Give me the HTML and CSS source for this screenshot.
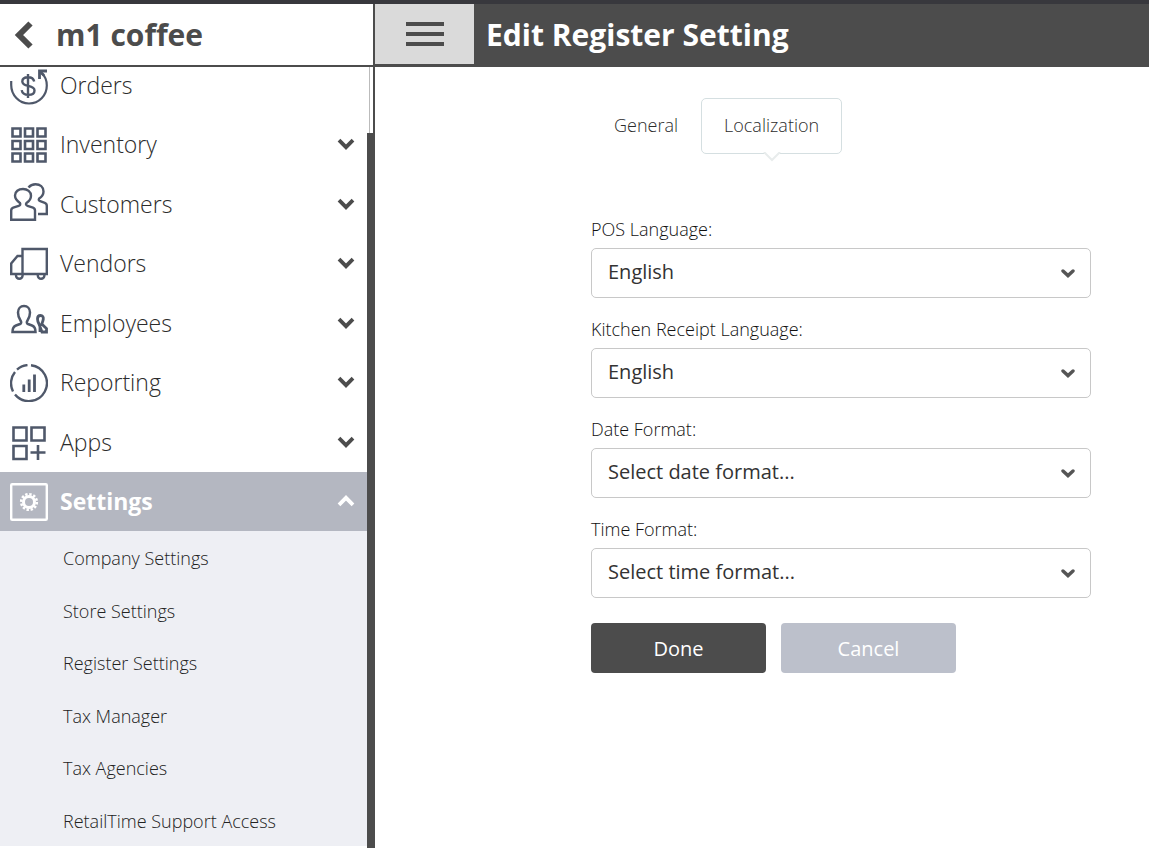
FILE: index.html
```html
<!DOCTYPE html>
<html lang="en">
<head>
<meta charset="utf-8">
<meta name="viewport" content="width=device-width, initial-scale=1">
<title>Edit Register Setting</title>
<link rel="stylesheet" href="styles.css">
</head>
<body>
<svg class="defs" width="0" height="0" aria-hidden="true">
  <symbol id="chevron" viewBox="0 0 18 12"><path d="M2 2.200l7 7 7-7" fill="none" stroke="currentColor" stroke-width="3.800"/></symbol>
  <symbol id="select-chevron" viewBox="0 0 14 10"><path d="M2 2l5 4.600 5-4.600" fill="none" stroke="currentColor" stroke-width="3.400" stroke-linecap="round"/></symbol>
</svg>
<div class="app">
  <aside class="sidebar">
    <div class="store">
      <button class="back" type="button" aria-label="Back"><svg width="20" height="28" viewBox="0 0 20 28"><path d="M16.500 2.500L5 14l11.500 11.500" fill="none" stroke="currentColor" stroke-width="6"/></svg></button>
      <span class="store-name">m1 coffee</span>
    </div>
    <div class="sidebar-body">
      <nav class="nav" aria-label="Main">
        <ul class="menu">
          <li><a class="item" href="#"><svg class="icon" viewBox="0 0 38 38"><g fill="none" stroke="currentColor" stroke-width="2.200"><path d="M1.200 14v4C1.200 28 9 36.500 19 36.500S36.800 28.500 36.800 18.500c0-5.500-1.800-9.500-5.300-12.500"/><path d="M37 4H29.500v8" stroke-width="2.800"/><path d="M30 4.500l4 4" stroke-width="2.600"/><path d="M24.200 14.500c-.6-2.800-2.900-4.300-6.100-4.300-3.500 0-5.800 1.600-5.800 4.300 0 6.200 12.200 2.700 12.200 8.900 0 2.900-2.500 4.500-6.100 4.500-3.800 0-6.200-1.700-6.700-4.800M18 7v24" stroke-width="2.400"/></g></svg><span>Orders</span></a></li>
          <li><a class="item" href="#"><svg class="icon" viewBox="0 0 38 38"><g fill="none" stroke="currentColor" stroke-width="2.600"><path d="M2.500 2.500h8v8h-8zM15 2.500h8v8h-8zM27.500 2.500h8v8h-8zM2.500 15h8v8h-8zM15 15h8v8h-8zM27.500 15h8v8h-8zM2.500 27.500h8v8h-8zM15 27.500h8v8h-8zM27.500 27.500h8v8h-8z"/></g></svg><span>Inventory</span><svg class="arrow"><use href="#chevron"/></svg></a></li>
          <li><a class="item" href="#"><svg class="icon raised" viewBox="0 0 38 38"><g fill="none" stroke="currentColor" stroke-width="2.400"><path d="M1.200 36.800V27.500c0-1.500.6-2.400 2-2.900l5.500-1.800c1.500-.5 2-1.500 1.200-2.900C6.500 17.500 5 15.500 5 12.500 5 8.500 8.500 6 13 6s8 2.700 8 6.700c0 3-1.500 5.300-4.500 7.200-1 1.400-.5 2.400 1 2.900l5.500 1.800c1.400.5 2 1.400 2 2.900v9.300z"/><path d="M18.500 4.500C20.300 2.200 22.500 1.200 25.500 1.200c4.500 0 8 2.800 8 7.300 0 2.900-1.500 5.200-4.300 7-.9 1.300-.4 2.200 1 2.700l4.600 1.600c1.400.5 2 1.400 2 2.900V31H28"/></g></svg><span>Customers</span><svg class="arrow"><use href="#chevron"/></svg></a></li>
          <li><a class="item" href="#"><svg class="icon" viewBox="0 0 38 38"><g fill="none" stroke="currentColor" stroke-width="2.400"><path d="M12.500 4H36.800v25H1.200V18.500L7.500 11h5zM12.500 4v25"/><path d="M6 29v1.500a3.300 3.300 0 0 0 6.600 0V29M27.800 29v1.500a3.300 3.300 0 0 0 6.600 0V29"/></g></svg><span>Vendors</span><svg class="arrow"><use href="#chevron"/></svg></a></li>
          <li><a class="item" href="#"><svg class="icon raised" viewBox="0 0 38 38"><g fill="none" stroke="currentColor" stroke-width="2.500"><path d="M2.500 30c0-3.500.8-5.500 3.500-6.500l4-1.500c1.500-.7 1.500-1.800.5-3.500C8.800 16 8 13.500 8 10.500 8 6.500 10.500 4 14 4s6 2.500 6 6.500c0 3-.8 5.500-2.500 8-1 1.700-1 2.800.5 3.500l4 1.500c2.700 1 3.500 3 3.500 6.500z"/><path d="M30.500 13.500c2.200 0 3 1.500 2.800 3.500-.2 2-1 3.500-1.500 5l4.700 4.500V30h-4.500l-3-8c-.8-1.500-1.500-3-1.500-5 0-2 .8-3.500 3-3.500M30 22.500V30" stroke-width="2.800"/></g></svg><span>Employees</span><svg class="arrow"><use href="#chevron"/></svg></a></li>
          <li><a class="item" href="#"><svg class="icon" viewBox="0 0 38 38"><g fill="none" stroke="currentColor"><path d="M21 1.200A18 18 0 1 1 5 30.500M3 27.500A18 18 0 0 1 5 8M7 5.700A18 18 0 0 1 17.500 1.100" stroke-width="2.400"/><path d="M13.800 28v-7.500M19.200 28V15.500M24.500 28V10.500" stroke-width="2.800"/></g></svg><span>Reporting</span><svg class="arrow"><use href="#chevron"/></svg></a></li>
          <li><a class="item" href="#"><svg class="icon" viewBox="0 0 38 38"><g fill="none" stroke="currentColor" stroke-width="2.600"><path d="M3.500 3.500h13v13h-13zM21.500 3.500h13v13h-13zM3.500 22h13v13h-13zM28 21v15M20.500 28.500h15"/></g></svg><span>Apps</span><svg class="arrow"><use href="#chevron"/></svg></a></li>
          <li><a class="item active" href="#" aria-expanded="true"><svg class="icon" viewBox="0 0 38 38"><g fill="none" stroke="currentColor"><rect x="1.200" y="1.200" width="35.600" height="35.600" rx="1" stroke-width="2.400"/><circle cx="19" cy="19" r="5.500" stroke-width="3"/><circle cx="19" cy="19" r="7.800" stroke-width="2.600" stroke-dasharray="2.400 1.684"/></g></svg><span>Settings</span><svg class="arrow up"><use href="#chevron"/></svg></a></li>
        </ul>
        <ul class="submenu">
          <li><a href="#">Company Settings</a></li>
          <li><a href="#">Store Settings</a></li>
          <li><a href="#">Register Settings</a></li>
          <li><a href="#">Tax Manager</a></li>
          <li><a href="#">Tax Agencies</a></li>
          <li><a href="#">RetailTime Support Access</a></li>
        </ul>
      </nav>
      <div class="scrollbar" aria-hidden="true"><span class="track"></span><span class="thumb"></span></div>
    </div>
  </aside>
  <main class="main">
    <header class="header">
      <button class="toggle" type="button" aria-label="Toggle menu"><span></span><span></span><span></span></button>
      <h1>Edit Register Setting</h1>
    </header>
    <div class="content">
      <nav class="tabs" aria-label="Sections">
        <a class="tab" href="#">General</a>
        <a class="tab current" href="#" aria-current="page">Localization<svg class="notch" viewBox="0 0 18 10"><path d="M0 0h18L9 9z" fill="#fff"/><path d="M1 0l8 8 8-8" fill="none" stroke="#e8ecec" stroke-width="2"/></svg></a>
      </nav>
      <form class="form">
        <div class="field">
          <label for="pos">POS Language:</label>
          <div class="control"><select id="pos"><option>English</option></select><svg class="caret"><use href="#select-chevron"/></svg></div>
        </div>
        <div class="field">
          <label for="kitchen">Kitchen Receipt Language:</label>
          <div class="control"><select id="kitchen"><option>English</option></select><svg class="caret"><use href="#select-chevron"/></svg></div>
        </div>
        <div class="field">
          <label for="date">Date Format:</label>
          <div class="control"><select id="date"><option>Select date format...</option></select><svg class="caret"><use href="#select-chevron"/></svg></div>
        </div>
        <div class="field">
          <label for="time">Time Format:</label>
          <div class="control"><select id="time"><option>Select time format...</option></select><svg class="caret"><use href="#select-chevron"/></svg></div>
        </div>
        <div class="actions">
          <button class="btn primary" type="button">Done</button>
          <button class="btn" type="button">Cancel</button>
        </div>
      </form>
    </div>
  </main>
</div>
</body>
</html>
```
FILE: styles.css
```css
* { box-sizing: border-box; }
body { margin: 0; font-family: "Open Sans", "Noto Sans", sans-serif; color: #4c4c4c; background: #fff; }
ul { list-style: none; margin: 0; padding: 0; }
a { color: inherit; text-decoration: none; }
button { border: 0; padding: 0; font: inherit; color: inherit; cursor: pointer; }
.defs { display: block; }
.app { display: flex; height: 100vh; border-top: 4px solid #38383d; }

.sidebar { display: flex; flex-direction: column; flex: none; width: 375px; border-right: 2px solid #4c4c4c; }
.store { display: flex; align-items: center; gap: 22px; flex: none; height: 63px; padding-left: 14px; border-bottom: 2px solid #4c4c4c; }
.back { display: flex; background: none; }
.store-name { font-size: 30px; line-height: 40px; font-weight: 700; }
.sidebar-body { display: flex; flex: 1; min-height: 0; overflow: hidden; }
.nav { flex: 1; min-width: 0; }
.menu { display: grid; grid-auto-rows: 1fr; height: 476px; margin-top: -12px; }
.item { display: flex; align-items: center; gap: 12px; height: 100%; padding: 0 12px 0 10px; font-size: 23px; font-weight: 300; color: #2c2c2c; }
.item span { flex: 1; }
.icon { flex: none; width: 38px; height: 38px; margin-top: 2px; color: #4f586a; }
.raised { margin: 0 0 3px; }
.arrow { width: 18px; height: 12px; color: #4c4c4c; }
.up { transform: rotate(180deg); }
.active { background: #b4b7c1; color: #fff; font-weight: 700; }
.active .icon, .active .arrow { color: #fff; }
.submenu { display: grid; grid-auto-rows: 1fr; height: 315px; background: #eeeff4; }
.submenu a { display: flex; align-items: center; height: 100%; padding: 2px 0 0 63px; font-size: 18px; font-weight: 300; color: #222; }
.scrollbar { display: flex; flex-direction: column; flex: none; width: 6px; }
.track { height: 66px; width: 1px; margin-left: 2px; background: #bbb; }
.thumb { flex: 1; background: #4c4c4c; }

.main { flex: 1; min-width: 0; }
.header { display: flex; align-items: stretch; gap: 12px; height: 63px; background: #4c4c4c; color: #fff; }
.toggle { display: flex; flex-direction: column; align-items: center; justify-content: center; gap: 6px; width: 99px; height: 60px; background: #dadada; }
.toggle span { width: 38px; height: 4px; background: #4c4c4c; }
h1 { margin: 0; font-size: 30px; line-height: 62px; font-weight: 700; }
.content { padding: 31px 58px 40px 216px; }
.tabs { display: flex; }
.tab { position: relative; height: 56px; padding: 0 22px; border: 1px solid transparent; border-radius: 5px; font-size: 18px; line-height: 52px; font-weight: 300; color: #2c2c2c; }
.current { border-color: #d5dfe1; }
.notch { position: absolute; left: 50%; top: 100%; width: 18px; height: 10px; margin: -1px 0 0 -9px; }
.form { margin-top: 62px; color: #333; }
.field { margin-bottom: 18px; }
label { display: block; font-size: 18px; line-height: 26px; height: 32px; font-weight: 300; color: #111; }
.control { position: relative; }
select { display: block; width: 100%; height: 50px; padding: 0 40px 3px 16px; border: 1px solid #c8c8c8; border-radius: 5px; appearance: none; background: #fff; color: inherit; font: 400 20px "Open Sans", "Noto Sans", sans-serif; }
.caret { position: absolute; right: 16px; top: 21px; width: 14px; height: 10px; color: #555; pointer-events: none; }
.actions { display: flex; gap: 15px; margin-top: 25px; }
.btn { width: 175px; height: 50px; border-radius: 4px; background: #bcc0cb; color: #fff; font-size: 20px; }
.primary { background: #4c4c4c; }
```
